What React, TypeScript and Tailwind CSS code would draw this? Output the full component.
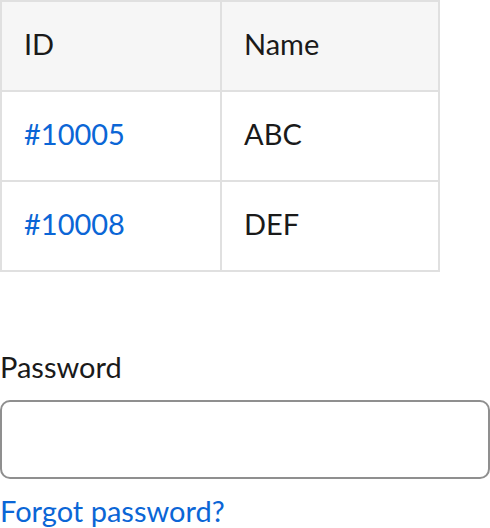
export default function App() {
  const rows = [
    { id: '#10005', name: 'ABC' },
    { id: '#10008', name: 'DEF' },
  ]

  return (
    <div className="w-[490px] bg-white text-[29px] text-[#1a1a1a]" style={{ fontFamily: 'Lato, "Noto Sans", sans-serif' }}>
      <table className="w-[440px] border-collapse border-2 border-[#e0e0e0]">
        <thead>
          <tr className="h-[90px] bg-[#f6f6f6]">
            <th className="w-[220px] border-2 border-[#e0e0e0] px-[22px] pb-[4px] text-left font-normal">ID</th>
            <th className="border-2 border-[#e0e0e0] px-[22px] pb-[4px] text-left font-normal">Name</th>
          </tr>
        </thead>
        <tbody>
          {rows.map(r => (
            <tr key={r.id} className="h-[90px]">
              <td className="border-2 border-[#e0e0e0] px-[22px] pb-[4px]">
                <a href="#" className="text-[#0b66d6]">{r.id}</a>
              </td>
              <td className="border-2 border-[#e0e0e0] px-[22px] pb-[4px]">{r.name}</td>
            </tr>
          ))}
        </tbody>
      </table>

      <div className="mt-[77px]">
        <label className="block leading-[36px]">Password</label>
        <input
          type="password"
          className="mt-[15px] block h-[79px] w-full rounded-[10px] border-2 border-[#8f8f8f] px-4 outline-none"
        />
        <a href="#" className="mt-[14px] block leading-[36px] text-[#0b66d6]">Forgot password?</a>
      </div>
    </div>
  )
}
